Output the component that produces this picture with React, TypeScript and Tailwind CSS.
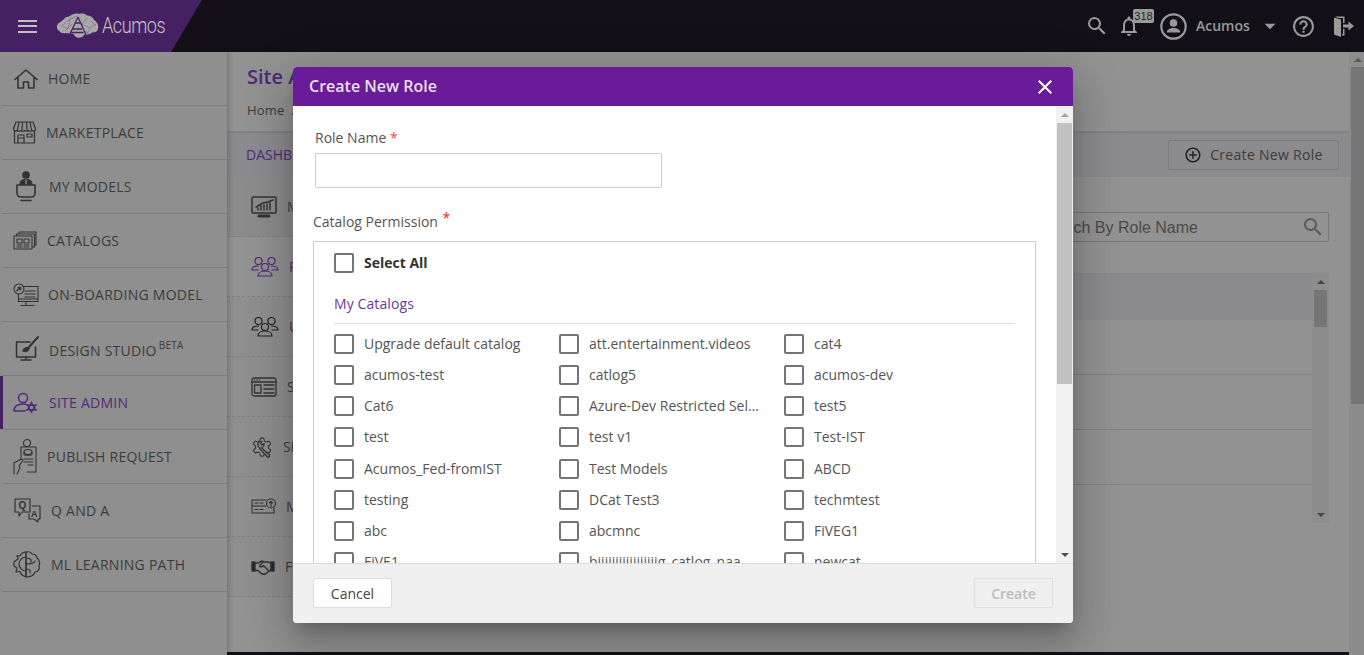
import React from "react";
import { MdSearch, MdNotificationsNone, MdArrowDropDown, MdHelpOutline, MdClose, MdOutlineAddCircleOutline } from "react-icons/md";

const S = ({ w, h, children, c = "#333", sw = 1.4 }: { w: number; h: number; children: React.ReactNode; c?: string; sw?: number }) => (
  <svg width={w} height={h} viewBox={`0 0 ${w} ${h}`} fill="none" stroke={c} strokeWidth={sw} strokeLinejoin="round" strokeLinecap="round" className="shrink-0">
    {children}
  </svg>
);

const Home = () => (
  <S w={24} h={20} sw={1.6}><path d="M1 10.500 12 1l11 9.500M4 8.500V19h5.500v-6h5v6H20V8.500" /></S>
);
const Market = () => (
  <S w={23} h={23} sw={1.2}><path d="M3 1h17l2.500 7c0 2-2 2.500-3 1.500-1 1-3 1-4 0-1 1-3 1-4 0-1 1-3 1-4 0-1 1-3 1-4 0-1 1-3 .5-3-1.500zM6 1 4.500 9M9.500 1 9 9M13.500 1l.5 8M17 1l1.500 8M1.500 10v12h20V10M5 22v-8h6v8M5 17h6M14 13h5v3h-5z" /></S>
);
const Models = () => (
  <S w={20} h={31} sw={1.3}>
    <circle cx="10" cy="4" r="3.200" fill="#333" />
    <path d="M4 14c0-4 2-5.500 6-5.500s6 1.500 6 5.500z" fill="#333" />
    <path d="M10 9v5" stroke="#8f8f8f" />
    <path d="M1 14h18v8c0 3-2 4-4 4H5c-2 0-4-1-4-4z" strokeWidth="1.600" fill="#8f8f8f" />
    <path d="M5 29.500h10" strokeWidth="1.600" />
  </S>
);
const Catalogs = () => (
  <S w={24} h={19} sw={1.1}>
    <path d="M1 5h18v13H1zM3.500 5V3h18v13h-2.500M6 3V1h17v13h-1.500" />
    <path d="M4 8h5v4H4zM11 8h5v4h-5zM4 14h5M11 14h5M4 16h5M11 16h5" />
  </S>
);
const Onboard = () => (
  <S w={26} h={24} sw={1.1}>
    <circle cx="6" cy="6" r="5" /><path d="M4 7.500 7.500 4.500M5.500 4.500h2v2" strokeWidth="1.600" />
    <path d="M10 3.500h15v15H5.500v-7M12 8h10M12 11h10M12 14h10M5.500 16h19M13 19v2.500M8 22.500h13" />
  </S>
);
const Design = () => (
  <S w={24} h={25} sw={1.5}>
    <path d="M15 6H1.500v15h19V11M11 21v3M6 24h10" />
    <path d="M23 1 14 11" strokeWidth="2" />
    <path d="M8 15c1-3 4-4 6-3 0 3-3 4-6 3z" fill="#333" />
  </S>
);
const Admin = () => (
  <S w={24} h={21} c="#4f2a78" sw={1.5}>
    <circle cx="10" cy="6" r="4.500" />
    <path d="M1 19c0-5 4-7 9-7 1 0 2 .1 3 .3M1 19h11" />
    <path d="M18.500 10.500v10M14 13l9 5M23 13l-9 5" strokeWidth="1.800" />
    <circle cx="18.500" cy="15.500" r="2.800" strokeWidth="2" fill="#8f8f8f" />
  </S>
);
const Publish = () => (
  <S w={24} h={37} sw={1.1}>
    <circle cx="14" cy="5" r="3.500" />
    <path d="M8 9h15v25h-9M8 9v12" />
    <ellipse cx="15" cy="14" rx="4" ry="2.500" /><path d="M11 14v2.500c0 1 8 1 8 0V14M11 21h9M11 24h9M15 27h5" />
    <path d="M1 36V25l7-4 2 1-4 6 1 2-3 6" />
  </S>
);
const QA = () => (
  <S w={27} h={25} sw={1.2}>
    <path d="M1 1h15v13H8l-3 4v-4H1z" />
    <path d="M18 8h8v13h-2v3l-4-3h-5v-5" />
    <text x="4.500" y="11" fontSize="10" fontWeight="700" fill="#333" stroke="none" fontFamily="Liberation Sans">Q</text>
    <text x="17" y="19" fontSize="9" fontWeight="700" fill="#333" stroke="none" fontFamily="Liberation Sans">A</text>
  </S>
);
const ML = () => (
  <S w={28} h={27} sw={1.2}>
    <path d="M13 1C9 1 8 3 7 5L4 4.500 5 8 1 11v4l3 2-1 4 4-.5c1 3 3 5 6 5z" />
    <path d="M13 1c2-.500 5 0 6 2 3 0 5 2 5 4 3 2 3 6 2 8 1 3-1 6-4 6-1 3-4 5-9 5" />
    <path d="M13 6a7 7 0 0 0 0 14M13 1v25M13 7c3 0 6 1 5 4M13 13c4 0 8 0 9-3M13 18c3 0 5 1 4 4" />
  </S>
);

const Monitor = () => (
  <S w={26} h={22} sw={1.5}>
    <rect x="1" y="1" width="24" height="16" rx="1" />
    <path d="M8 20h10" strokeWidth="3" />
    <path d="M5 11 12 7l5-1 5-2M7 14v-2M10 14v-4M13 14V9M16 14V8M19 14V7" strokeWidth="1.500" />
  </S>
);
const People = ({ c = "#222" }: { c?: string }) => (
  <S w={28} h={21} c={c} sw={1.2}>
    <circle cx="7.500" cy="5" r="3.500" /><circle cx="20.500" cy="5" r="3.500" /><circle cx="14" cy="11" r="3.500" />
    <path d="M1 14c0-3 3-4 6.500-4M1 14h6M27 14c0-3-3-4-6.500-4M27 14h-6M7 20c0-3 3-5 7-5s7 2 7 5z" />
  </S>
);
const Browser = () => (
  <S w={26} h={20} sw={1.3}>
    <rect x="1" y="1" width="24" height="18" rx="2" />
    <path d="M1 5h24M3.500 3h.1M6 3h.1M8.500 3h.1" />
    <path d="M3.500 8h6.500v8H3.500zM13 8h10M13 12h10M13 16h10" />
  </S>
);
const Gear = () => (
  <S w={22} h={22} sw={1.2}>
    <g transform="scale(.92)">
      <path d="M12.220 2h-.44a2 2 0 0 0-2 2v.18a2 2 0 0 1-1 1.730l-.43.25a2 2 0 0 1-2 0l-.15-.08a2 2 0 0 0-2.730.73l-.22.38a2 2 0 0 0 .73 2.730l.15.1a2 2 0 0 1 1 1.720v.51a2 2 0 0 1-1 1.740l-.15.09a2 2 0 0 0-.73 2.730l.22.38a2 2 0 0 0 2.730.73l.15-.08a2 2 0 0 1 2 0l.43.25a2 2 0 0 1 1 1.730V20a2 2 0 0 0 2 2h.44a2 2 0 0 0 2-2v-.18a2 2 0 0 1 1-1.730l.43-.25a2 2 0 0 1 2 0l.15.08a2 2 0 0 0 2.730-.73l.22-.39a2 2 0 0 0-.73-2.730l-.15-.08a2 2 0 0 1-1-1.740v-.5a2 2 0 0 1 1-1.740l.15-.09a2 2 0 0 0 .73-2.730l-.22-.38a2 2 0 0 0-2.730-.73l-.15.08a2 2 0 0 1-2 0l-.43-.25a2 2 0 0 1-1-1.730V4a2 2 0 0 0-2-2z" />
    </g>
    <path d="M7 8c0-2 2-3 4-2.500L9.500 7.500l1.500 1.500 2-1.500c.5 2-1 4-3 4L18.500 19c.5 1.500-.5 2.500-2 2L9 13c-1-1-2-3-2-5z" fill="#8f8f8f" />
  </S>
);
const Server = () => (
  <S w={25} h={17} sw={1.1}>
    <circle cx="20" cy="5.500" r="4.500" /><path d="M20 8.500v-5M18.500 5 20 3.500 21.500 5" />
    <path d="M15 2H1v6h14M1 8v7h22v-5M1 8h14M4 5h3M9 5h3M4 11.500h3M9 11.500h3" />
  </S>
);
const Shake = () => (
  <S w={24} h={16} sw={1.4}>
    <path d="M1 3h3v9H1zM23 3h-3v9h3z" fill="#222" />
    <path d="M4 4h3l4-2 2 1 4 0 3 1v7l-5 3.500-2 1-3-1-3-3H4M12 3 8.500 7c1 1.500 3 1 4-.5l5 5" />
  </S>
);

const Exit = () => (
  <svg width="20" height="21" viewBox="0 0 20 21" fill="#9a9a9a" className="shrink-0">
    <path d="M0 1.500 7 3.500V21L0 18.500z" />
    <path d="M1 .5h9.500V7H9V2H4zM10.500 13v6.500H8V18h1v-5z" />
    <path d="M9 8.500h5.500V5.500L20 10l-5.500 4.500v-3H9z" />
  </svg>
);
const Account = () => (
  <svg width="27" height="27" viewBox="0 0 27 27" fill="none" className="shrink-0">
    <circle cx="13.500" cy="13.500" r="12.200" stroke="#9a9a9a" strokeWidth="2.200" />
    <circle cx="13.500" cy="10" r="3.800" fill="#9a9a9a" />
    <path d="M6.800 19.500c0-3 3-4.500 6.700-4.500s6.700 1.500 6.700 4.500z" fill="#9a9a9a" />
  </svg>
);
const Brain = () => (
  <svg width="42" height="26" viewBox="0 0 42 26" className="shrink-0">
    <path d="M0 12.500C2 9 5 8.500 7 6c1-2 4-2.500 6-3 2-2 6-3 9-2 2-1 6-.5 8 1.500 3 0 6 1.500 7 4.500 3 2 5 5 4 8.500 0 3-3 4-6 4-2 2-5 2.500-8 2 0 1.500-2 3-4 3-2 .5-4 0-5-1.500-1-1-2-2-2-2.500-3 0-5 0-7-.5-3 .5-5 0-7-2-2-2-3-4-2-7z" fill="#a8a8a8" />
    <path d="M21 4 12.500 22M21 4l8 18M16 16h9M14.500 19.500h12M18 10l5 0" fill="none" stroke="#452063" strokeWidth="1.300" />
    <path d="M4 13l9-7 7-3M13 6l-2 10-6-3M30 5l-5 6 8 4 6-4M33 15l-3 6M8 18l7-7M34 8l5 5M26 16l6 5" fill="none" stroke="#77648a" strokeWidth=".6" />
  </svg>
);

const Check = ({ label, bold }: { label: string; bold?: boolean }) => (
  <label className="flex items-center min-w-0">
    <span className="w-5 h-5 border-2 border-[#757575] rounded-[2px] bg-white shrink-0" />
    <span className={`ml-2.5 w-[172px] truncate text-sm leading-5 ${bold ? "font-bold text-[#333]" : "text-[#555]"}`}>{label}</span>
  </label>
);

const nav = [
  { t: "HOME", i: <Home />, icon: "ml-[12px]", txt: "ml-[10px]" },
  { t: "MARKETPLACE", i: <Market />, icon: "ml-[11px]", txt: "ml-[10px]" },
  { t: "MY MODELS", i: <Models />, icon: "ml-[14px]", txt: "ml-[13px]" },
  { t: "CATALOGS", i: <Catalogs />, icon: "ml-[11px]", txt: "ml-[10px]" },
  { t: "ON-BOARDING MODEL", i: <Onboard />, icon: "ml-[11px]", txt: "ml-[9px]" },
  { t: "DESIGN STUDIO", i: <Design />, icon: "ml-[13px]", txt: "ml-[10px] translate-y-[2px]", beta: true },
  { t: "SITE ADMIN", i: <Admin />, icon: "ml-[11px]", txt: "ml-[12px]", on: true },
  { t: "PUBLISH REQUEST", i: <Publish />, icon: "ml-[11px]", txt: "ml-[10px]" },
  { t: "Q AND A", i: <QA />, icon: "ml-[12px]", txt: "ml-[10px]" },
  { t: "ML LEARNING PATH", i: <ML />, icon: "ml-[11px]", txt: "ml-[10px]" },
];

const side = [
  { t: "Monitoring", i: <Monitor />, row: "bg-[#8c8c8c]" },
  { t: "Roles", i: <People c="#4f2a78" />, row: "bg-[#929292] text-[#4f2a78]" },
  { t: "Users", i: <People />, row: "bg-[#8f8f8f]" },
  { t: "Site Content", i: <Browser />, row: "bg-[#8f8f8f]" },
  { t: "Site Config", i: <Gear />, row: "bg-[#8f8f8f]" },
  { t: "Messages", i: <Server />, row: "bg-[#8f8f8f]" },
  { t: "Federation", i: <Shake />, row: "bg-[#8f8f8f]" },
];

const cats = [
  "Upgrade default catalog", "att.entertainment.videos", "cat4",
  "acumos-test", "catlog5", "acumos-dev",
  "Cat6", "Azure-Dev Restricted Selection", "test5",
  "test", "test v1", "Test-IST",
  "Acumos_Fed-fromIST", "Test Models", "ABCD",
  "testing", "DCat Test3", "techmtest",
  "abc", "abcmnc", "FiVEG1",
  "FiVE1", "bjjjjjjjjjjjjjjjjjg_catlog_naa", "newcat",
];

export default function App() {
  return (
    <div className="relative w-[1364px] h-[655px] overflow-hidden bg-[#8f8f8f] font-['Open_Sans',sans-serif] text-[#3c3c3c] flex flex-col">
      {/* top bar */}
      <header className="h-[52px] shrink-0 bg-[#121016] flex items-center relative z-10">
        <div className="w-[202px] h-full bg-[#452063] [clip-path:polygon(0_0,100%_0,171px_100%,0_100%)] flex items-center pl-[18px]">
          <div className="flex flex-col gap-[3.5px] w-[19px]">
            <span className="h-[2px] bg-[#c0c0c0]" /><span className="h-[2px] bg-[#c0c0c0]" /><span className="h-[2px] bg-[#c0c0c0]" />
          </div>
          <span className="ml-[20px]"><Brain /></span>
          <span className="ml-[3px] text-[22px] font-['Roboto',sans-serif] font-light text-[#c4c4c4] leading-none tracking-[-0.5px] scale-x-[0.82] origin-left">Acumos</span>
        </div>
        <div className="ml-auto flex items-center text-[#9a9a9a]">
          <MdSearch size={24} className="mr-[8px]" />
          <span className="relative mr-[19px]">
            <MdNotificationsNone size={24} />
            <span className="absolute left-[16px] -top-[5px] w-[21px] h-[14px] rounded-[2px] bg-[#9a9a9a] text-[#222] text-[11px] leading-[14px] text-center font-['Liberation_Sans',sans-serif]">318</span>
          </span>
          <Account />
          <span className="ml-[9px] text-sm font-semibold w-[56px]">Acumos</span>
          <MdArrowDropDown size={26} className="ml-[5px]" />
          <MdHelpOutline size={25} className="ml-[8px]" />
          <span className="ml-[18px] mr-[10px]"><Exit /></span>
        </div>
      </header>

      <div className="flex flex-1 min-h-0">
        {/* left nav */}
        <nav className="w-[227px] shrink-0 pl-[2px] bg-[#8f8f8f] shadow-[2px_0_5px_rgba(0,0,0,0.2)] relative z-[1]">
          {nav.map((n) => (
            <div key={n.t} className={`relative h-[54px] border-b border-[#7d7d7d] flex items-center text-sm tracking-[0.25px] ${n.on ? "text-[#4f2a78]" : ""}`}>
              {n.on && <span className="absolute -left-[2px] top-0 bottom-0 w-[3px] bg-[#452063]" />}
              <span className={n.icon}>{n.i}</span>
              <span className={`${n.txt} whitespace-nowrap`}>
                {n.t}
                {n.beta && <sup className="ml-[2px] -top-[0.7em] text-[10px]">BETA</sup>}
              </span>
            </div>
          ))}
        </nav>

        {/* main */}
        <main className="flex-1 min-w-0 flex flex-col bg-[#929292]">
          <div className="h-[81px] shrink-0 pl-[20px] pt-[10px] border-b-2 border-[#838383]">
            <h1 className="text-xl font-semibold leading-[30px] text-[#4f2a78]">Site Admin</h1>
            <p className="mt-[8px] text-[13px] leading-5 tracking-[0.2px]">Home &nbsp;/ Site Admin</p>
          </div>
          <div className="h-[44px] shrink-0 bg-[#8b8a8e] flex items-center pl-[19px] pr-[10px]">
            <span className="text-sm text-[#4f2a78]">DASHBOARD</span>
            <button className="ml-auto w-[171px] h-[30px] border border-[#7c7c7c] rounded-[2px] flex items-center justify-center gap-[8px] text-sm tracking-[0.3px]">
              <MdOutlineAddCircleOutline size={18} className="text-[#222]" />
              Create New Role
            </button>
          </div>
          <div className="flex-1 min-h-0 flex">
            <div className="w-[280px] shrink-0">
              {side.map((s) => (
                <div key={s.t} className={`h-[60px] flex items-center pl-[24px] gap-[10px] text-sm border-b border-dashed border-[#828282] ${s.row}`}>
                  {s.i}<span>{s.t}</span>
                </div>
              ))}
            </div>
            <div className="flex-1 min-w-0 pr-[20px]">
              <div className="flex justify-end mt-[35px]">
                <div className="w-[400px] h-[30px] border border-[#777] rounded-[2px] flex items-center justify-end pr-[3px] font-['Liberation_Sans',sans-serif] text-[#4a4a4a]">
                  <span className="text-base mr-[103px] pt-[1px]">Search By Role Name</span>
                  <MdSearch size={24} className="text-[#5a5a5a]" />
                </div>
              </div>
              <div className="mt-[31px] h-[250px] flex">
                <div className="flex-1 min-w-0">
                  <div className="h-[47px] bg-[#8b8a8e]" />
                  <div className="h-[55px] border-b border-[#828282]" />
                  <div className="h-[55px] border-b border-[#828282]" />
                  <div className="h-[55px] border-b border-[#828282]" />
                </div>
                <div className="w-[17px] shrink-0 bg-[#8d8d8d] flex flex-col items-center">
                  <span className="mt-[7px] mb-[6px] border-x-4 border-x-transparent border-b-[4px] border-b-[#444]" />
                  <span className="w-[13px] h-[37px] bg-[#767676]" />
                  <span className="mt-auto mb-[6px] border-x-4 border-x-transparent border-t-[4px] border-t-[#444]" />
                </div>
              </div>
            </div>
          </div>
          <div className="h-[3px] shrink-0 bg-[#121016]" />
        </main>

        {/* page scrollbar */}
        <div className="w-[15px] shrink-0 bg-[#8c8c8c] flex flex-col items-end">
          <div className="h-[15px] w-[13px] flex items-center justify-center">
            <span className="border-x-4 border-x-transparent border-b-[4px] border-b-[#555]" />
          </div>
          <div className="h-[337px] w-[13px] bg-[#767676]" />
        </div>
      </div>

      {/* modal */}
      <div className="absolute left-[293px] top-[67px] w-[780px] h-[556px] z-20 rounded-[4px] overflow-hidden bg-white flex flex-col shadow-[0_11px_15px_-7px_rgba(0,0,0,0.2),0_24px_38px_3px_rgba(0,0,0,0.14),0_9px_46px_8px_rgba(0,0,0,0.12)]">
        <div className="h-[39px] shrink-0 bg-[#6a1b9a] flex items-center pl-[16px] pr-[16px]">
          <h2 className="text-base font-semibold text-[#eadff0] -translate-y-px">Create New Role</h2>
          <MdClose size={24} className="ml-auto text-white" />
        </div>
        <div className="flex-1 min-h-0 flex">
          <div className="flex-1 min-w-0 overflow-hidden pl-[20px] pr-[20px]">
            <div className="pl-[2px] pt-[22px]">
              <div className="text-sm leading-5 text-[#555]">Role Name <span className="text-[#f44]">*</span></div>
              <div className="mt-[5px] w-[347px] h-[35px] border border-[#ccc] rounded-[2px]" />
            </div>
            <div className="mt-[24px] text-sm leading-5 text-[#555]">
              Catalog Permission <sup className="ml-[1px] -top-[0.3em] text-[#f22] text-sm">*</sup>
            </div>
            <div className="mt-[9px] w-[723px] h-[400px] border border-[#ccc] pl-[20px] pr-[20px] pt-[11px]">
              <Check label="Select All" bold />
              <div className="mt-[21px] text-sm font-medium leading-5 tracking-[0.1px] text-[#6a3aa0]">My Catalogs</div>
              <div className="mt-[9px] border-t border-[#ddd]" />
              <div className="mt-[4.200px] grid grid-cols-[225px_225px_225px] auto-rows-[31.2px] items-center">
                {cats.map((c) => <Check key={c} label={c} />)}
              </div>
            </div>
          </div>
          <div className="w-[17px] shrink-0 bg-[#f1f1f1] flex flex-col items-center">
            <div className="h-[17px] flex items-center justify-center">
              <span className="border-x-4 border-x-transparent border-b-[4px] border-b-[#a3a3a3]" />
            </div>
            <div className="w-[15px] h-[261px] bg-[#c1c1c1]" />
            <span className="mt-auto mb-[6px] border-x-4 border-x-transparent border-t-[4px] border-t-[#505050]" />
          </div>
        </div>
        <div className="h-[60px] shrink-0 bg-[#f0f0f0] border-t border-[#ddd] flex items-start pt-[14px] justify-between px-[20px]">
          <button className="w-[79px] h-[30px] pt-[1px] bg-white border border-[#ddd] rounded-[2px] text-sm text-[#444]">Cancel</button>
          <button disabled className="w-[79px] h-[30px] pt-[1px] border border-[#ddd] rounded-[2px] text-sm font-semibold text-[#bdbdbd]">Create</button>
        </div>
      </div>
    </div>
  );
}
